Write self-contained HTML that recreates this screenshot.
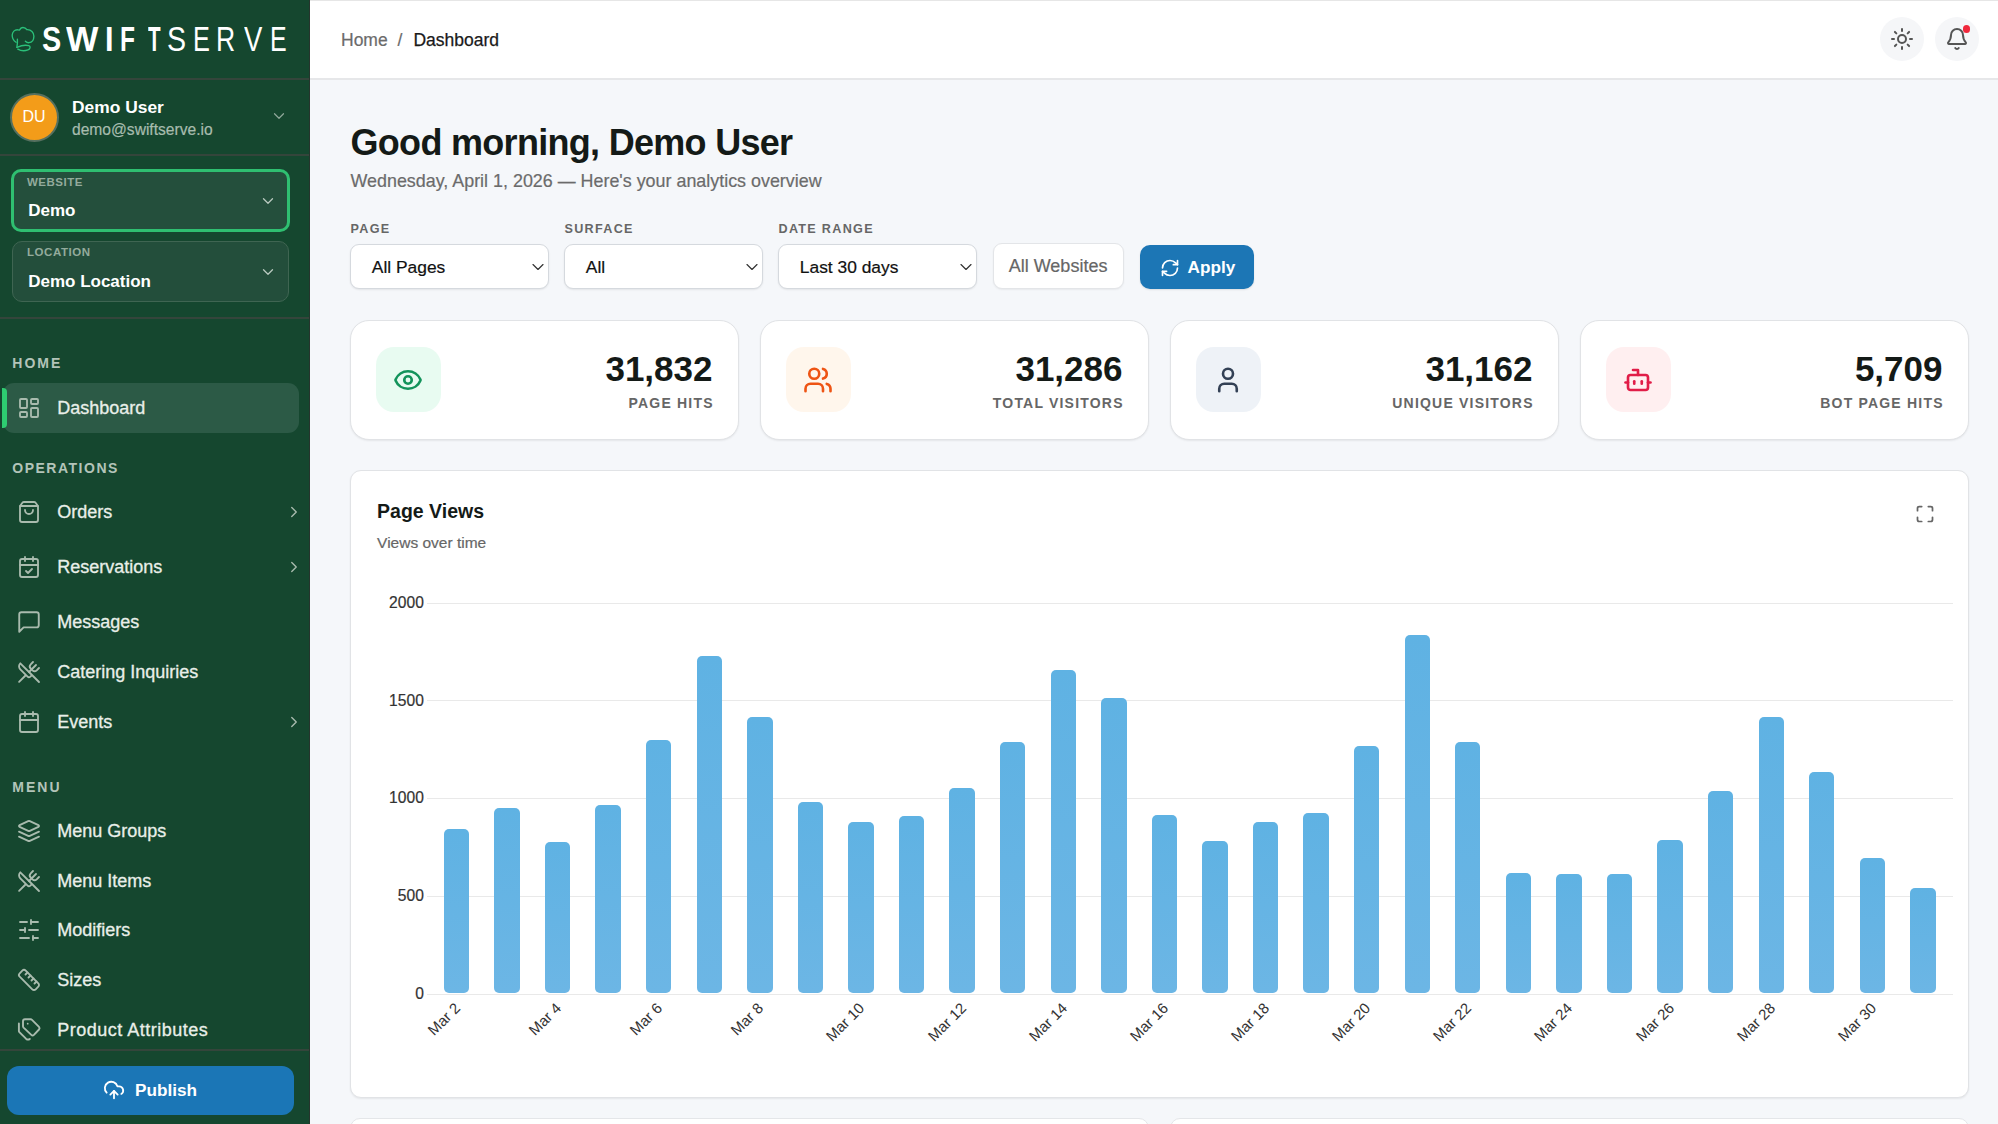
<!DOCTYPE html>
<html><head><meta charset="utf-8"><title>SwiftServe Dashboard</title>
<style>
*{box-sizing:border-box;margin:0;padding:0}
html,body{width:1998px;height:1124px;overflow:hidden;background:#f5f7fa;font-family:"Liberation Sans",sans-serif}
.t{position:absolute;line-height:1;white-space:nowrap}
.ic{position:absolute;display:block}
.b{position:absolute}
</style></head><body>
<div class="b" style="left:0;top:0;width:309.5px;height:1124px;background:#15472f"></div>
<div class="b" style="left:309px;top:0;width:1.2px;height:1124px;background:#26352d"></div>
<div class="b" style="left:0;top:78px;width:309px;height:1.6px;background:#34453b"></div>
<div class="b" style="left:0;top:154px;width:309px;height:1.6px;background:#34453b"></div>
<div class="b" style="left:0;top:317px;width:309px;height:1.6px;background:#34453b"></div>
<div class="b" style="left:0;top:1049px;width:309px;height:1.6px;background:#34453b"></div>
<svg class="ic" style="left:8px;top:22px" width="32" height="34" viewBox="0 0 32 34" fill="none" stroke="#2bc07a" stroke-width="1.35" stroke-linecap="round" stroke-linejoin="round"><path d="M8 20.3C5.3 18.5 4.1 16 4.2 13C4.4 9.8 6.6 7.6 9.8 7.8Q11 8 11.6 8.1C12.3 6.4 13.6 5.5 15 5.5C16.6 5.5 18 6.3 18.9 7.7C23 7.4 26 10.3 25.9 14.3C25.8 18.2 23.6 20.6 21 20.7C19.6 20.7 18.3 20.2 17.4 19.2"/><path d="M9.4 17.2C9.6 20 9.4 22.5 8.9 25.3"/><path d="M8.9 25.3C12.5 23.8 17.5 22.8 20.8 23.7C22.8 24.4 22.5 27 20 27.9C17 29 12.5 28.7 9.8 27.1"/></svg>
<div class="t" style="left:41.95px;top:21.17px;font-size:35px;font-weight:700;color:#ffffff;letter-spacing:0px;transform:scaleX(0.823);transform-origin:0 0;-webkit-text-stroke:0">S</div>
<div class="t" style="left:66.0px;top:21.17px;font-size:35px;font-weight:700;color:#ffffff;letter-spacing:0px;transform:scaleX(0.981);transform-origin:0 0;-webkit-text-stroke:0">W</div>
<div class="t" style="left:104.93px;top:21.17px;font-size:35px;font-weight:700;color:#ffffff;letter-spacing:0px;transform:scaleX(0.872);transform-origin:0 0;-webkit-text-stroke:0">I</div>
<div class="t" style="left:120.34px;top:21.17px;font-size:35px;font-weight:700;color:#ffffff;letter-spacing:0px;transform:scaleX(0.700);transform-origin:0 0;-webkit-text-stroke:0">F</div>
<div class="t" style="left:148.36px;top:21.17px;font-size:35px;font-weight:700;color:#ffffff;letter-spacing:0px;transform:scaleX(0.588);transform-origin:0 0;-webkit-text-stroke:0">T</div>
<div class="t" style="left:166.65px;top:21.17px;font-size:35px;font-weight:400;color:#ffffff;letter-spacing:0px;transform:scaleX(0.817);transform-origin:0 0;-webkit-text-stroke:0">S</div>
<div class="t" style="left:192.92px;top:21.17px;font-size:35px;font-weight:400;color:#ffffff;letter-spacing:0px;transform:scaleX(0.723);transform-origin:0 0;-webkit-text-stroke:0">E</div>
<div class="t" style="left:216.31px;top:21.17px;font-size:35px;font-weight:400;color:#ffffff;letter-spacing:0px;transform:scaleX(0.759);transform-origin:0 0;-webkit-text-stroke:0">R</div>
<div class="t" style="left:243.84px;top:21.17px;font-size:35px;font-weight:400;color:#ffffff;letter-spacing:0px;transform:scaleX(0.784);transform-origin:0 0;-webkit-text-stroke:0">V</div>
<div class="t" style="left:269.75px;top:21.17px;font-size:35px;font-weight:400;color:#ffffff;letter-spacing:0px;transform:scaleX(0.713);transform-origin:0 0;-webkit-text-stroke:0">E</div>
<div class="b" style="left:9.5px;top:92.5px;width:49px;height:49px;border-radius:50%;background:#f39c19;border:2.5px solid #56705f"></div>
<div class="t" style="left:22.5px;top:108.96px;font-size:16px;font-weight:400;color:#ffffff;letter-spacing:0px;-webkit-text-stroke:0">DU</div>
<div class="t" style="left:72px;top:99.27px;font-size:17.4px;font-weight:700;color:#ffffff;letter-spacing:0px;">Demo User</div>
<div class="t" style="left:72px;top:121.59px;font-size:15.6px;font-weight:400;color:#a7bcae;letter-spacing:0px;;-webkit-text-stroke:0.2px #a7bcae">demo@swiftserve.io</div>
<svg class="ic" style="left:270px;top:107px;" width="18" height="18" viewBox="0 0 24 24" fill="none" stroke="#8fa89a" stroke-width="1.6" stroke-linecap="round" stroke-linejoin="round"><path d="m6 9 6 6 6-6"/></svg>
<div class="b" style="left:10.5px;top:168.7px;width:279.3px;height:63.7px;border-radius:10px;background:#244f3c;border:3px solid #2fbf71"></div>
<div class="t" style="left:27px;top:176.57px;font-size:11.5px;font-weight:700;color:#93ab9c;letter-spacing:0.5px;">WEBSITE</div>
<div class="t" style="left:28.2px;top:201.51px;font-size:17px;font-weight:700;color:#ffffff;letter-spacing:0px;">Demo</div>
<svg class="ic" style="left:259px;top:192px;" width="18" height="18" viewBox="0 0 24 24" fill="none" stroke="#b9c9bf" stroke-width="1.7" stroke-linecap="round" stroke-linejoin="round"><path d="m6 9 6 6 6-6"/></svg>
<div class="b" style="left:12px;top:241.3px;width:277px;height:60.5px;border-radius:10px;background:#234e3b;border:1px solid #3f6552"></div>
<div class="t" style="left:27px;top:247.27px;font-size:11.5px;font-weight:700;color:#93ab9c;letter-spacing:0.55px;">LOCATION</div>
<div class="t" style="left:28.2px;top:272.61px;font-size:17px;font-weight:700;color:#ffffff;letter-spacing:0px;">Demo Location</div>
<svg class="ic" style="left:259px;top:263px;" width="18" height="18" viewBox="0 0 24 24" fill="none" stroke="#b9c9bf" stroke-width="1.7" stroke-linecap="round" stroke-linejoin="round"><path d="m6 9 6 6 6-6"/></svg>
<div class="t" style="left:12.3px;top:356.15px;font-size:14px;font-weight:700;color:#b3c4b9;letter-spacing:2px;">HOME</div>
<div class="b" style="left:3.4px;top:383.1px;width:295.3px;height:49.5px;border-radius:11px;background:#2c5a46"></div>
<div class="b" style="left:2px;top:388px;width:5px;height:39.7px;border-radius:0 4px 4px 0;background:#2ecc71"></div>
<div class="t" style="left:57.2px;top:399.26px;font-size:18px;font-weight:400;color:#e9efe9;letter-spacing:0px;-webkit-text-stroke:0.3px #e9efe9">Dashboard</div>
<svg class="ic" style="left:17.3px;top:396.0px;" width="24" height="24" viewBox="0 0 24 24" fill="none" stroke="#a9bbae" stroke-width="1.85" stroke-linecap="round" stroke-linejoin="round"><rect width="7" height="9" x="3" y="3" rx="1"/><rect width="7" height="5" x="14" y="3" rx="1"/><rect width="7" height="9" x="14" y="12" rx="1"/><rect width="7" height="5" x="3" y="16" rx="1"/></svg>
<div class="t" style="left:12.3px;top:460.95px;font-size:14px;font-weight:700;color:#b3c4b9;letter-spacing:1.5px;">OPERATIONS</div>
<div class="t" style="left:57.2px;top:503.06px;font-size:18px;font-weight:400;color:#e9efe9;letter-spacing:0px;-webkit-text-stroke:0.3px #e9efe9">Orders</div>
<svg class="ic" style="left:17.3px;top:499.79999999999995px;" width="24" height="24" viewBox="0 0 24 24" fill="none" stroke="#a9bbae" stroke-width="1.85" stroke-linecap="round" stroke-linejoin="round"><path d="M16 10a4 4 0 0 1-8 0"/><path d="M3.103 6.034h17.794"/><path d="M3.4 5.467a2 2 0 0 0-.4 1.2V20a2 2 0 0 0 2 2h14a2 2 0 0 0 2-2V6.667a2 2 0 0 0-.4-1.2l-2-2.667A2 2 0 0 0 17 2H7a2 2 0 0 0-1.6.8z"/></svg>
<svg class="ic" style="left:285px;top:502.79999999999995px;" width="18" height="18" viewBox="0 0 24 24" fill="none" stroke="#a9bbae" stroke-width="1.8" stroke-linecap="round" stroke-linejoin="round"><path d="m9 18 6-6-6-6"/></svg>
<div class="t" style="left:57.2px;top:558.16px;font-size:18px;font-weight:400;color:#e9efe9;letter-spacing:0px;-webkit-text-stroke:0.3px #e9efe9">Reservations</div>
<svg class="ic" style="left:17.3px;top:554.9px;" width="24" height="24" viewBox="0 0 24 24" fill="none" stroke="#a9bbae" stroke-width="1.85" stroke-linecap="round" stroke-linejoin="round"><path d="M8 2v4"/><path d="M16 2v4"/><rect width="18" height="18" x="3" y="4" rx="2"/><path d="M3 10h18"/><path d="m9 16 2 2 4-4"/></svg>
<svg class="ic" style="left:285px;top:557.9px;" width="18" height="18" viewBox="0 0 24 24" fill="none" stroke="#a9bbae" stroke-width="1.8" stroke-linecap="round" stroke-linejoin="round"><path d="m9 18 6-6-6-6"/></svg>
<div class="t" style="left:57.2px;top:612.76px;font-size:18px;font-weight:400;color:#e9efe9;letter-spacing:0px;-webkit-text-stroke:0.3px #e9efe9">Messages</div>
<svg class="ic" style="left:16.2px;top:608.5px;" width="26" height="26" viewBox="0 0 24 24" fill="none" stroke="#a9bbae" stroke-width="1.75" stroke-linecap="round" stroke-linejoin="round"><path d="M21 15a2 2 0 0 1-2 2H7l-4 4V5a2 2 0 0 1 2-2h14a2 2 0 0 1 2 2z"/></svg>
<div class="t" style="left:57.2px;top:662.76px;font-size:18px;font-weight:400;color:#e9efe9;letter-spacing:0px;-webkit-text-stroke:0.3px #e9efe9">Catering Inquiries</div>
<svg class="ic" style="left:17.3px;top:659.5px;" width="24" height="24" viewBox="0 0 24 24" fill="none" stroke="#a9bbae" stroke-width="1.85" stroke-linecap="round" stroke-linejoin="round"><path d="m16 2-2.3 2.3a3 3 0 0 0 0 4.2l1.8 1.8a3 3 0 0 0 4.2 0L22 8"/><path d="M15 15 3.3 3.3a4.2 4.2 0 0 0 0 6l7.3 7.3c.7.7 2 .7 2.8 0L15 15Zm0 0 7 7"/><path d="m2.1 21.8 6.4-6.3"/><path d="m19 5-7 7"/></svg>
<div class="t" style="left:57.2px;top:712.76px;font-size:18px;font-weight:400;color:#e9efe9;letter-spacing:0px;-webkit-text-stroke:0.3px #e9efe9">Events</div>
<svg class="ic" style="left:17.3px;top:709.5px;" width="24" height="24" viewBox="0 0 24 24" fill="none" stroke="#a9bbae" stroke-width="1.85" stroke-linecap="round" stroke-linejoin="round"><path d="M8 2v4"/><path d="M16 2v4"/><rect width="18" height="18" x="3" y="4" rx="2"/><path d="M3 10h18"/></svg>
<svg class="ic" style="left:285px;top:712.5px;" width="18" height="18" viewBox="0 0 24 24" fill="none" stroke="#a9bbae" stroke-width="1.8" stroke-linecap="round" stroke-linejoin="round"><path d="m9 18 6-6-6-6"/></svg>
<div class="t" style="left:12.3px;top:779.65px;font-size:14px;font-weight:700;color:#b3c4b9;letter-spacing:2px;">MENU</div>
<div class="t" style="left:57.2px;top:821.76px;font-size:18px;font-weight:400;color:#e9efe9;letter-spacing:0px;-webkit-text-stroke:0.3px #e9efe9">Menu Groups</div>
<svg class="ic" style="left:17.3px;top:818.5px;" width="24" height="24" viewBox="0 0 24 24" fill="none" stroke="#a9bbae" stroke-width="1.85" stroke-linecap="round" stroke-linejoin="round"><path d="M12.83 2.18a2 2 0 0 0-1.66 0L2.6 6.08a1 1 0 0 0 0 1.83l8.58 3.91a2 2 0 0 0 1.66 0l8.58-3.9a1 1 0 0 0 0-1.83Z"/><path d="m22 17.65-9.17 4.16a2 2 0 0 1-1.66 0L2 17.65"/><path d="m22 12.65-9.17 4.16a2 2 0 0 1-1.66 0L2 12.65"/></svg>
<div class="t" style="left:57.2px;top:871.76px;font-size:18px;font-weight:400;color:#e9efe9;letter-spacing:0px;-webkit-text-stroke:0.3px #e9efe9">Menu Items</div>
<svg class="ic" style="left:17.3px;top:868.5px;" width="24" height="24" viewBox="0 0 24 24" fill="none" stroke="#a9bbae" stroke-width="1.85" stroke-linecap="round" stroke-linejoin="round"><path d="m16 2-2.3 2.3a3 3 0 0 0 0 4.2l1.8 1.8a3 3 0 0 0 4.2 0L22 8"/><path d="M15 15 3.3 3.3a4.2 4.2 0 0 0 0 6l7.3 7.3c.7.7 2 .7 2.8 0L15 15Zm0 0 7 7"/><path d="m2.1 21.8 6.4-6.3"/><path d="m19 5-7 7"/></svg>
<div class="t" style="left:57.2px;top:921.26px;font-size:18px;font-weight:400;color:#e9efe9;letter-spacing:0px;-webkit-text-stroke:0.3px #e9efe9">Modifiers</div>
<svg class="ic" style="left:17.3px;top:918.0px;" width="24" height="24" viewBox="0 0 24 24" fill="none" stroke="#a9bbae" stroke-width="1.85" stroke-linecap="round" stroke-linejoin="round"><path d="M21 4h-7"/><path d="M10 4H3"/><path d="M21 12h-9"/><path d="M8 12H3"/><path d="M21 20h-5"/><path d="M12 20H3"/><path d="M14 2v4"/><path d="M8 10v4"/><path d="M16 18v4"/></svg>
<div class="t" style="left:57.2px;top:970.76px;font-size:18px;font-weight:400;color:#e9efe9;letter-spacing:0px;-webkit-text-stroke:0.3px #e9efe9">Sizes</div>
<svg class="ic" style="left:17.3px;top:967.5px;" width="24" height="24" viewBox="0 0 24 24" fill="none" stroke="#a9bbae" stroke-width="1.85" stroke-linecap="round" stroke-linejoin="round"><path d="M21.3 15.3a2.4 2.4 0 0 1 0 3.4l-2.6 2.6a2.4 2.4 0 0 1-3.4 0L2.7 8.7a2.41 2.41 0 0 1 0-3.4l2.6-2.6a2.41 2.41 0 0 1 3.4 0Z"/><path d="m14.5 12.5 2-2"/><path d="m11.5 9.5 2-2"/><path d="m8.5 6.5 2-2"/><path d="m17.5 15.5 2-2"/></svg>
<div class="t" style="left:57.2px;top:1020.76px;font-size:18px;font-weight:400;color:#e9efe9;letter-spacing:0.5px;-webkit-text-stroke:0.3px #e9efe9">Product Attributes</div>
<svg class="ic" style="left:14px;top:1014px" width="30" height="30" viewBox="0 0 30 30" fill="none" stroke="#a9bbae" stroke-width="1.9" stroke-linecap="round" stroke-linejoin="round"><path d="M9 7.3Q9 5.3 11 5.3L16.6 5.3Q17.4 5.3 18 5.9L25 12.9Q26.2 14.2 25 15.5L19.9 20.9Q18.6 22.1 17.3 20.9L9.6 13.6Q9 13 9 12.2Z"/><path d="M4.9 9.5L4.9 17Q4.9 17.6 5.4 18.1L12.2 24.9Q14 26.3 15.8 24.9"/><circle cx="13.7" cy="9.7" r="0.9" fill="#a9bbae" stroke="none"/></svg>
<div class="b" style="left:7px;top:1065.8px;width:287px;height:49.4px;border-radius:12px;background:#1b76b6"></div>
<svg class="ic" style="left:103px;top:1079px;" width="22" height="22" viewBox="0 0 24 24" fill="none" stroke="#ffffff" stroke-width="2" stroke-linecap="round" stroke-linejoin="round"><path d="M12 13v8"/><path d="M4 14.899A7 7 0 1 1 15.71 8h1.79a4.5 4.5 0 0 1 2.5 8.242"/><path d="m8 17 4-4 4 4"/></svg>
<div class="t" style="left:135px;top:1081.94px;font-size:17.2px;font-weight:700;color:#ffffff;letter-spacing:0px;">Publish</div>
<div class="b" style="left:310px;top:0;width:1688px;height:78px;background:#ffffff;border-top:1px solid #e6e6e6"></div>
<div class="b" style="left:310px;top:78px;width:1688px;height:1.8px;background:#e6e7e9"></div>
<div class="t" style="left:341px;top:31.69px;font-size:17.5px;font-weight:400;color:#6b6b6b;letter-spacing:0px;;-webkit-text-stroke:0.2px #6b6b6b">Home</div>
<div class="t" style="left:397.5px;top:31.69px;font-size:17.5px;font-weight:400;color:#6b6b6b;letter-spacing:0px;;-webkit-text-stroke:0.2px #6b6b6b">/</div>
<div class="t" style="left:413.4px;top:31.69px;font-size:17.5px;font-weight:400;color:#1a1a1a;letter-spacing:0px;-webkit-text-stroke:0.25px #1a1a1a">Dashboard</div>
<div class="b" style="left:1880px;top:17px;width:44px;height:44px;border-radius:50%;background:#f5f6f8"></div>
<div class="b" style="left:1934.6px;top:17px;width:44px;height:44px;border-radius:50%;background:#f5f6f8"></div>
<svg class="ic" style="left:1890px;top:27px;" width="24" height="24" viewBox="0 0 24 24" fill="none" stroke="#555555" stroke-width="2" stroke-linecap="round" stroke-linejoin="round"><circle cx="12" cy="12" r="4"/><path d="M12 2v2"/><path d="M12 20v2"/><path d="m4.93 4.93 1.41 1.41"/><path d="m17.66 17.66 1.41 1.41"/><path d="M2 12h2"/><path d="M20 12h2"/><path d="m6.34 17.66-1.41 1.41"/><path d="m19.07 4.93-1.41 1.41"/></svg>
<svg class="ic" style="left:1944.6px;top:27px;" width="24" height="24" viewBox="0 0 24 24" fill="none" stroke="#555555" stroke-width="2" stroke-linecap="round" stroke-linejoin="round"><path d="M10.268 21a2 2 0 0 0 3.464 0"/><path d="M3.262 15.326A1 1 0 0 0 4 17h16a1 1 0 0 0 .74-1.673C19.41 13.956 18 12.499 18 8A6 6 0 0 0 6 8c0 4.499-1.411 5.956-2.738 7.326"/></svg>
<div class="b" style="left:1962.8px;top:25.2px;width:7.6px;height:7.6px;border-radius:50%;background:#f0283c"></div>
<div class="t" style="left:350.5px;top:125.33px;font-size:36px;font-weight:700;color:#141a17;letter-spacing:-0.7px;">Good morning, Demo User</div>
<div class="t" style="left:350.5px;top:173.45px;font-size:17.9px;font-weight:400;color:#6b6b6b;letter-spacing:0px;;-webkit-text-stroke:0.2px #6b6b6b">Wednesday, April 1, 2026 — Here's your analytics overview</div>
<div class="t" style="left:350.5px;top:223.03px;font-size:12.6px;font-weight:700;color:#666666;letter-spacing:1.3px;">PAGE</div>
<div class="b" style="left:350.0px;top:244px;width:198.5px;height:44.8px;border-radius:9px;background:#fff;border:1px solid #d5d9de;box-shadow:0 1px 2px rgba(0,0,0,0.08)"></div>
<div class="t" style="left:371.8px;top:258.77px;font-size:17.4px;font-weight:400;color:#111111;letter-spacing:0px;;-webkit-text-stroke:0.2px #111111">All Pages</div>
<svg class="ic" style="left:528.3px;top:256.5px;" width="20" height="20" viewBox="0 0 24 24" fill="none" stroke="#333333" stroke-width="1.4" stroke-linecap="round" stroke-linejoin="round"><path d="m6 9 6 6 6-6"/></svg>
<div class="t" style="left:564.5px;top:223.03px;font-size:12.6px;font-weight:700;color:#666666;letter-spacing:1.3px;">SURFACE</div>
<div class="b" style="left:564.0px;top:244px;width:198.5px;height:44.8px;border-radius:9px;background:#fff;border:1px solid #d5d9de;box-shadow:0 1px 2px rgba(0,0,0,0.08)"></div>
<div class="t" style="left:585.8px;top:258.77px;font-size:17.4px;font-weight:400;color:#111111;letter-spacing:0px;;-webkit-text-stroke:0.2px #111111">All</div>
<svg class="ic" style="left:742.3px;top:256.5px;" width="20" height="20" viewBox="0 0 24 24" fill="none" stroke="#333333" stroke-width="1.4" stroke-linecap="round" stroke-linejoin="round"><path d="m6 9 6 6 6-6"/></svg>
<div class="t" style="left:778.5px;top:223.03px;font-size:12.6px;font-weight:700;color:#666666;letter-spacing:1.3px;">DATE RANGE</div>
<div class="b" style="left:778.0px;top:244px;width:198.5px;height:44.8px;border-radius:9px;background:#fff;border:1px solid #d5d9de;box-shadow:0 1px 2px rgba(0,0,0,0.08)"></div>
<div class="t" style="left:799.8px;top:258.77px;font-size:17.4px;font-weight:400;color:#111111;letter-spacing:0px;;-webkit-text-stroke:0.2px #111111">Last 30 days</div>
<svg class="ic" style="left:956.3px;top:256.5px;" width="20" height="20" viewBox="0 0 24 24" fill="none" stroke="#333333" stroke-width="1.4" stroke-linecap="round" stroke-linejoin="round"><path d="m6 9 6 6 6-6"/></svg>
<div class="b" style="left:993px;top:243.4px;width:130.7px;height:45.4px;border-radius:9px;background:#fff;border:1px solid #e3e5e8;box-shadow:0 1px 2px rgba(0,0,0,0.06)"></div>
<div class="t" style="left:1008.7px;top:256.76px;font-size:18px;font-weight:400;color:#666666;letter-spacing:0px;;-webkit-text-stroke:0.2px #666666">All Websites</div>
<div class="b" style="left:1139.7px;top:244.8px;width:114.3px;height:44.7px;border-radius:10px;background:#1c76b5;box-shadow:0 1px 2px rgba(0,0,0,0.1)"></div>
<svg class="ic" style="left:1159.5px;top:257.5px;" width="20" height="20" viewBox="0 0 24 24" fill="none" stroke="#ffffff" stroke-width="2" stroke-linecap="round" stroke-linejoin="round"><path d="M3 12a9 9 0 0 1 9-9 9.75 9.75 0 0 1 6.74 2.74L21 8"/><path d="M21 3v5h-5"/><path d="M21 12a9 9 0 0 1-9 9 9.75 9.75 0 0 1-6.74-2.74L3 16"/><path d="M8 16H3v5"/></svg>
<div class="t" style="left:1187.5px;top:258.94px;font-size:17.2px;font-weight:700;color:#ffffff;letter-spacing:0px;">Apply</div>
<div class="b" style="left:350px;top:320.2px;width:389px;height:119.5px;border-radius:19px;background:#fff;border:1px solid #e1e3e6;box-shadow:0 1px 2px rgba(0,0,0,0.07)"></div>
<div class="b" style="left:376px;top:347.3px;width:64.5px;height:64.5px;border-radius:18px;background:#e8fbf1"></div>
<svg class="ic" style="left:393.3px;top:364.5px;" width="30" height="30" viewBox="0 0 24 24" fill="none" stroke="#13935b" stroke-width="2.1" stroke-linecap="round" stroke-linejoin="round"><path d="M2.062 12.348a1 1 0 0 1 0-.696 10.75 10.75 0 0 1 19.876 0 1 1 0 0 1 0 .696 10.75 10.75 0 0 1-19.876 0"/><circle cx="12" cy="12" r="3"/></svg>
<div class="t" style="right:1285.5px;top:351.17px;font-size:35px;font-weight:700;color:#141a17;letter-spacing:0px;">31,832</div>
<div class="t" style="right:1284.3px;top:396.15px;font-size:14px;font-weight:700;color:#666666;letter-spacing:1.2px;">PAGE HITS</div>
<div class="b" style="left:760px;top:320.2px;width:389px;height:119.5px;border-radius:19px;background:#fff;border:1px solid #e1e3e6;box-shadow:0 1px 2px rgba(0,0,0,0.07)"></div>
<div class="b" style="left:786px;top:347.3px;width:64.5px;height:64.5px;border-radius:18px;background:#fff6ec"></div>
<svg class="ic" style="left:803.3px;top:364.5px;" width="30" height="30" viewBox="0 0 24 24" fill="none" stroke="#ee5414" stroke-width="2.1" stroke-linecap="round" stroke-linejoin="round"><path d="M16 21v-2a4 4 0 0 0-4-4H6a4 4 0 0 0-4 4v2"/><circle cx="9" cy="7" r="4"/><path d="M22 21v-2a4 4 0 0 0-3-3.87"/><path d="M16 3.13a4 4 0 0 1 0 7.75"/></svg>
<div class="t" style="right:875.5px;top:351.17px;font-size:35px;font-weight:700;color:#141a17;letter-spacing:0px;">31,286</div>
<div class="t" style="right:874.3px;top:396.15px;font-size:14px;font-weight:700;color:#666666;letter-spacing:1.2px;">TOTAL VISITORS</div>
<div class="b" style="left:1170px;top:320.2px;width:389px;height:119.5px;border-radius:19px;background:#fff;border:1px solid #e1e3e6;box-shadow:0 1px 2px rgba(0,0,0,0.07)"></div>
<div class="b" style="left:1196px;top:347.3px;width:64.5px;height:64.5px;border-radius:18px;background:#eef2f7"></div>
<svg class="ic" style="left:1213.3px;top:364.5px;" width="30" height="30" viewBox="0 0 24 24" fill="none" stroke="#334155" stroke-width="2.1" stroke-linecap="round" stroke-linejoin="round"><path d="M19 21v-2a4 4 0 0 0-4-4H9a4 4 0 0 0-4 4v2"/><circle cx="12" cy="7" r="4"/></svg>
<div class="t" style="right:465.5px;top:351.17px;font-size:35px;font-weight:700;color:#141a17;letter-spacing:0px;">31,162</div>
<div class="t" style="right:464.29999999999995px;top:396.15px;font-size:14px;font-weight:700;color:#666666;letter-spacing:1.2px;">UNIQUE VISITORS</div>
<div class="b" style="left:1580px;top:320.2px;width:389px;height:119.5px;border-radius:19px;background:#fff;border:1px solid #e1e3e6;box-shadow:0 1px 2px rgba(0,0,0,0.07)"></div>
<div class="b" style="left:1606px;top:347.3px;width:64.5px;height:64.5px;border-radius:18px;background:#ffeff0"></div>
<svg class="ic" style="left:1623.3px;top:364.5px;" width="30" height="30" viewBox="0 0 24 24" fill="none" stroke="#e11d48" stroke-width="2.1" stroke-linecap="round" stroke-linejoin="round"><path d="M12 8V4H8"/><rect width="16" height="12" x="4" y="8" rx="2"/><path d="M2 14h2"/><path d="M20 14h2"/><path d="M15 13v2"/><path d="M9 13v2"/></svg>
<div class="t" style="right:55.5px;top:351.17px;font-size:35px;font-weight:700;color:#141a17;letter-spacing:0px;">5,709</div>
<div class="t" style="right:54.299999999999955px;top:396.15px;font-size:14px;font-weight:700;color:#666666;letter-spacing:1.2px;">BOT PAGE HITS</div>
<div class="b" style="left:350px;top:470.2px;width:1619px;height:628px;border-radius:11px;background:#fff;border:1px solid #e1e3e6;box-shadow:0 1px 2px rgba(0,0,0,0.07)"></div>
<div class="t" style="left:377.1px;top:501.69px;font-size:19.5px;font-weight:700;color:#141a17;letter-spacing:0px;">Page Views</div>
<div class="t" style="left:377.1px;top:534.78px;font-size:15.5px;font-weight:400;color:#666666;letter-spacing:0px;;-webkit-text-stroke:0.2px #666666">Views over time</div>
<svg class="ic" style="left:1915.4px;top:503.6px;" width="20" height="20" viewBox="0 0 24 24" fill="none" stroke="#666666" stroke-width="2.1" stroke-linecap="round" stroke-linejoin="round"><path d="M8 3H5a2 2 0 0 0-2 2v3"/><path d="M21 8V5a2 2 0 0 0-2-2h-3"/><path d="M3 16v3a2 2 0 0 0 2 2h3"/><path d="M16 21h3a2 2 0 0 0 2-2v-3"/></svg>
<div class="b" style="left:427px;top:602.5px;width:1526px;height:1px;background:#e9e9e9"></div>
<div class="t" style="right:1574.2px;top:595.39px;font-size:15.6px;font-weight:400;color:#333333;letter-spacing:0px;;-webkit-text-stroke:0.2px #333333">2000</div>
<div class="b" style="left:427px;top:700.0px;width:1526px;height:1px;background:#e9e9e9"></div>
<div class="t" style="right:1574.2px;top:692.89px;font-size:15.6px;font-weight:400;color:#333333;letter-spacing:0px;;-webkit-text-stroke:0.2px #333333">1500</div>
<div class="b" style="left:427px;top:797.5px;width:1526px;height:1px;background:#e9e9e9"></div>
<div class="t" style="right:1574.2px;top:790.39px;font-size:15.6px;font-weight:400;color:#333333;letter-spacing:0px;;-webkit-text-stroke:0.2px #333333">1000</div>
<div class="b" style="left:427px;top:895.5px;width:1526px;height:1px;background:#e9e9e9"></div>
<div class="t" style="right:1574.2px;top:888.39px;font-size:15.6px;font-weight:400;color:#333333;letter-spacing:0px;;-webkit-text-stroke:0.2px #333333">500</div>
<div class="b" style="left:427px;top:993.5px;width:1526px;height:1px;background:#e9e9e9"></div>
<div class="t" style="right:1574.2px;top:986.39px;font-size:15.6px;font-weight:400;color:#333333;letter-spacing:0px;;-webkit-text-stroke:0.2px #333333">0</div>
<div class="b" style="left:443.70px;top:829px;width:25.4px;height:164.0px;border-radius:5px;background:linear-gradient(#5fb2e3,#6cb6e5)"></div>
<div class="t" style="left:251.90px;top:999.5px;width:200px;text-align:right;font-size:15px;color:#333333;transform-origin:100% 0;transform:rotate(-45deg);">Mar 2</div>
<div class="b" style="left:494.27px;top:807.6px;width:25.4px;height:185.4px;border-radius:5px;background:linear-gradient(#5fb2e3,#6cb6e5)"></div>
<div class="b" style="left:544.84px;top:842px;width:25.4px;height:151.0px;border-radius:5px;background:linear-gradient(#5fb2e3,#6cb6e5)"></div>
<div class="t" style="left:353.04px;top:999.5px;width:200px;text-align:right;font-size:15px;color:#333333;transform-origin:100% 0;transform:rotate(-45deg);">Mar 4</div>
<div class="b" style="left:595.41px;top:805.3px;width:25.4px;height:187.7px;border-radius:5px;background:linear-gradient(#5fb2e3,#6cb6e5)"></div>
<div class="b" style="left:645.98px;top:740.4px;width:25.4px;height:252.6px;border-radius:5px;background:linear-gradient(#5fb2e3,#6cb6e5)"></div>
<div class="t" style="left:454.18px;top:999.5px;width:200px;text-align:right;font-size:15px;color:#333333;transform-origin:100% 0;transform:rotate(-45deg);">Mar 6</div>
<div class="b" style="left:696.55px;top:655.5px;width:25.4px;height:337.5px;border-radius:5px;background:linear-gradient(#5fb2e3,#6cb6e5)"></div>
<div class="b" style="left:747.12px;top:717.4px;width:25.4px;height:275.6px;border-radius:5px;background:linear-gradient(#5fb2e3,#6cb6e5)"></div>
<div class="t" style="left:555.32px;top:999.5px;width:200px;text-align:right;font-size:15px;color:#333333;transform-origin:100% 0;transform:rotate(-45deg);">Mar 8</div>
<div class="b" style="left:797.69px;top:801.5px;width:25.4px;height:191.5px;border-radius:5px;background:linear-gradient(#5fb2e3,#6cb6e5)"></div>
<div class="b" style="left:848.26px;top:821.5px;width:25.4px;height:171.5px;border-radius:5px;background:linear-gradient(#5fb2e3,#6cb6e5)"></div>
<div class="t" style="left:656.46px;top:999.5px;width:200px;text-align:right;font-size:15px;color:#333333;transform-origin:100% 0;transform:rotate(-45deg);">Mar 10</div>
<div class="b" style="left:898.83px;top:816px;width:25.4px;height:177.0px;border-radius:5px;background:linear-gradient(#5fb2e3,#6cb6e5)"></div>
<div class="b" style="left:949.40px;top:787.7px;width:25.4px;height:205.3px;border-radius:5px;background:linear-gradient(#5fb2e3,#6cb6e5)"></div>
<div class="t" style="left:757.60px;top:999.5px;width:200px;text-align:right;font-size:15px;color:#333333;transform-origin:100% 0;transform:rotate(-45deg);">Mar 12</div>
<div class="b" style="left:999.97px;top:741.7px;width:25.4px;height:251.3px;border-radius:5px;background:linear-gradient(#5fb2e3,#6cb6e5)"></div>
<div class="b" style="left:1050.54px;top:670px;width:25.4px;height:323.0px;border-radius:5px;background:linear-gradient(#5fb2e3,#6cb6e5)"></div>
<div class="t" style="left:858.74px;top:999.5px;width:200px;text-align:right;font-size:15px;color:#333333;transform-origin:100% 0;transform:rotate(-45deg);">Mar 14</div>
<div class="b" style="left:1101.11px;top:698.1px;width:25.4px;height:294.9px;border-radius:5px;background:linear-gradient(#5fb2e3,#6cb6e5)"></div>
<div class="b" style="left:1151.68px;top:815px;width:25.4px;height:178.0px;border-radius:5px;background:linear-gradient(#5fb2e3,#6cb6e5)"></div>
<div class="t" style="left:959.88px;top:999.5px;width:200px;text-align:right;font-size:15px;color:#333333;transform-origin:100% 0;transform:rotate(-45deg);">Mar 16</div>
<div class="b" style="left:1202.25px;top:840.8px;width:25.4px;height:152.2px;border-radius:5px;background:linear-gradient(#5fb2e3,#6cb6e5)"></div>
<div class="b" style="left:1252.82px;top:822.2px;width:25.4px;height:170.8px;border-radius:5px;background:linear-gradient(#5fb2e3,#6cb6e5)"></div>
<div class="t" style="left:1061.02px;top:999.5px;width:200px;text-align:right;font-size:15px;color:#333333;transform-origin:100% 0;transform:rotate(-45deg);">Mar 18</div>
<div class="b" style="left:1303.39px;top:813px;width:25.4px;height:180.0px;border-radius:5px;background:linear-gradient(#5fb2e3,#6cb6e5)"></div>
<div class="b" style="left:1353.96px;top:746.4px;width:25.4px;height:246.6px;border-radius:5px;background:linear-gradient(#5fb2e3,#6cb6e5)"></div>
<div class="t" style="left:1162.16px;top:999.5px;width:200px;text-align:right;font-size:15px;color:#333333;transform-origin:100% 0;transform:rotate(-45deg);">Mar 20</div>
<div class="b" style="left:1404.53px;top:634.9px;width:25.4px;height:358.1px;border-radius:5px;background:linear-gradient(#5fb2e3,#6cb6e5)"></div>
<div class="b" style="left:1455.10px;top:742.4px;width:25.4px;height:250.6px;border-radius:5px;background:linear-gradient(#5fb2e3,#6cb6e5)"></div>
<div class="t" style="left:1263.30px;top:999.5px;width:200px;text-align:right;font-size:15px;color:#333333;transform-origin:100% 0;transform:rotate(-45deg);">Mar 22</div>
<div class="b" style="left:1505.67px;top:872.9px;width:25.4px;height:120.1px;border-radius:5px;background:linear-gradient(#5fb2e3,#6cb6e5)"></div>
<div class="b" style="left:1556.24px;top:873.5px;width:25.4px;height:119.5px;border-radius:5px;background:linear-gradient(#5fb2e3,#6cb6e5)"></div>
<div class="t" style="left:1364.44px;top:999.5px;width:200px;text-align:right;font-size:15px;color:#333333;transform-origin:100% 0;transform:rotate(-45deg);">Mar 24</div>
<div class="b" style="left:1606.81px;top:873.9px;width:25.4px;height:119.1px;border-radius:5px;background:linear-gradient(#5fb2e3,#6cb6e5)"></div>
<div class="b" style="left:1657.38px;top:839.7px;width:25.4px;height:153.3px;border-radius:5px;background:linear-gradient(#5fb2e3,#6cb6e5)"></div>
<div class="t" style="left:1465.58px;top:999.5px;width:200px;text-align:right;font-size:15px;color:#333333;transform-origin:100% 0;transform:rotate(-45deg);">Mar 26</div>
<div class="b" style="left:1707.95px;top:791px;width:25.4px;height:202.0px;border-radius:5px;background:linear-gradient(#5fb2e3,#6cb6e5)"></div>
<div class="b" style="left:1758.52px;top:717px;width:25.4px;height:276.0px;border-radius:5px;background:linear-gradient(#5fb2e3,#6cb6e5)"></div>
<div class="t" style="left:1566.72px;top:999.5px;width:200px;text-align:right;font-size:15px;color:#333333;transform-origin:100% 0;transform:rotate(-45deg);">Mar 28</div>
<div class="b" style="left:1809.09px;top:771.5px;width:25.4px;height:221.5px;border-radius:5px;background:linear-gradient(#5fb2e3,#6cb6e5)"></div>
<div class="b" style="left:1859.66px;top:858.3px;width:25.4px;height:134.7px;border-radius:5px;background:linear-gradient(#5fb2e3,#6cb6e5)"></div>
<div class="t" style="left:1667.86px;top:999.5px;width:200px;text-align:right;font-size:15px;color:#333333;transform-origin:100% 0;transform:rotate(-45deg);">Mar 30</div>
<div class="b" style="left:1910.23px;top:887.7px;width:25.4px;height:105.3px;border-radius:5px;background:linear-gradient(#5fb2e3,#6cb6e5)"></div>
<div class="b" style="left:350px;top:1118px;width:799px;height:40px;border-radius:10px;background:#fff;border:1px solid #e4e6e9"></div>
<div class="b" style="left:1170px;top:1118px;width:799px;height:40px;border-radius:10px;background:#fff;border:1px solid #e4e6e9"></div>
</body></html>
